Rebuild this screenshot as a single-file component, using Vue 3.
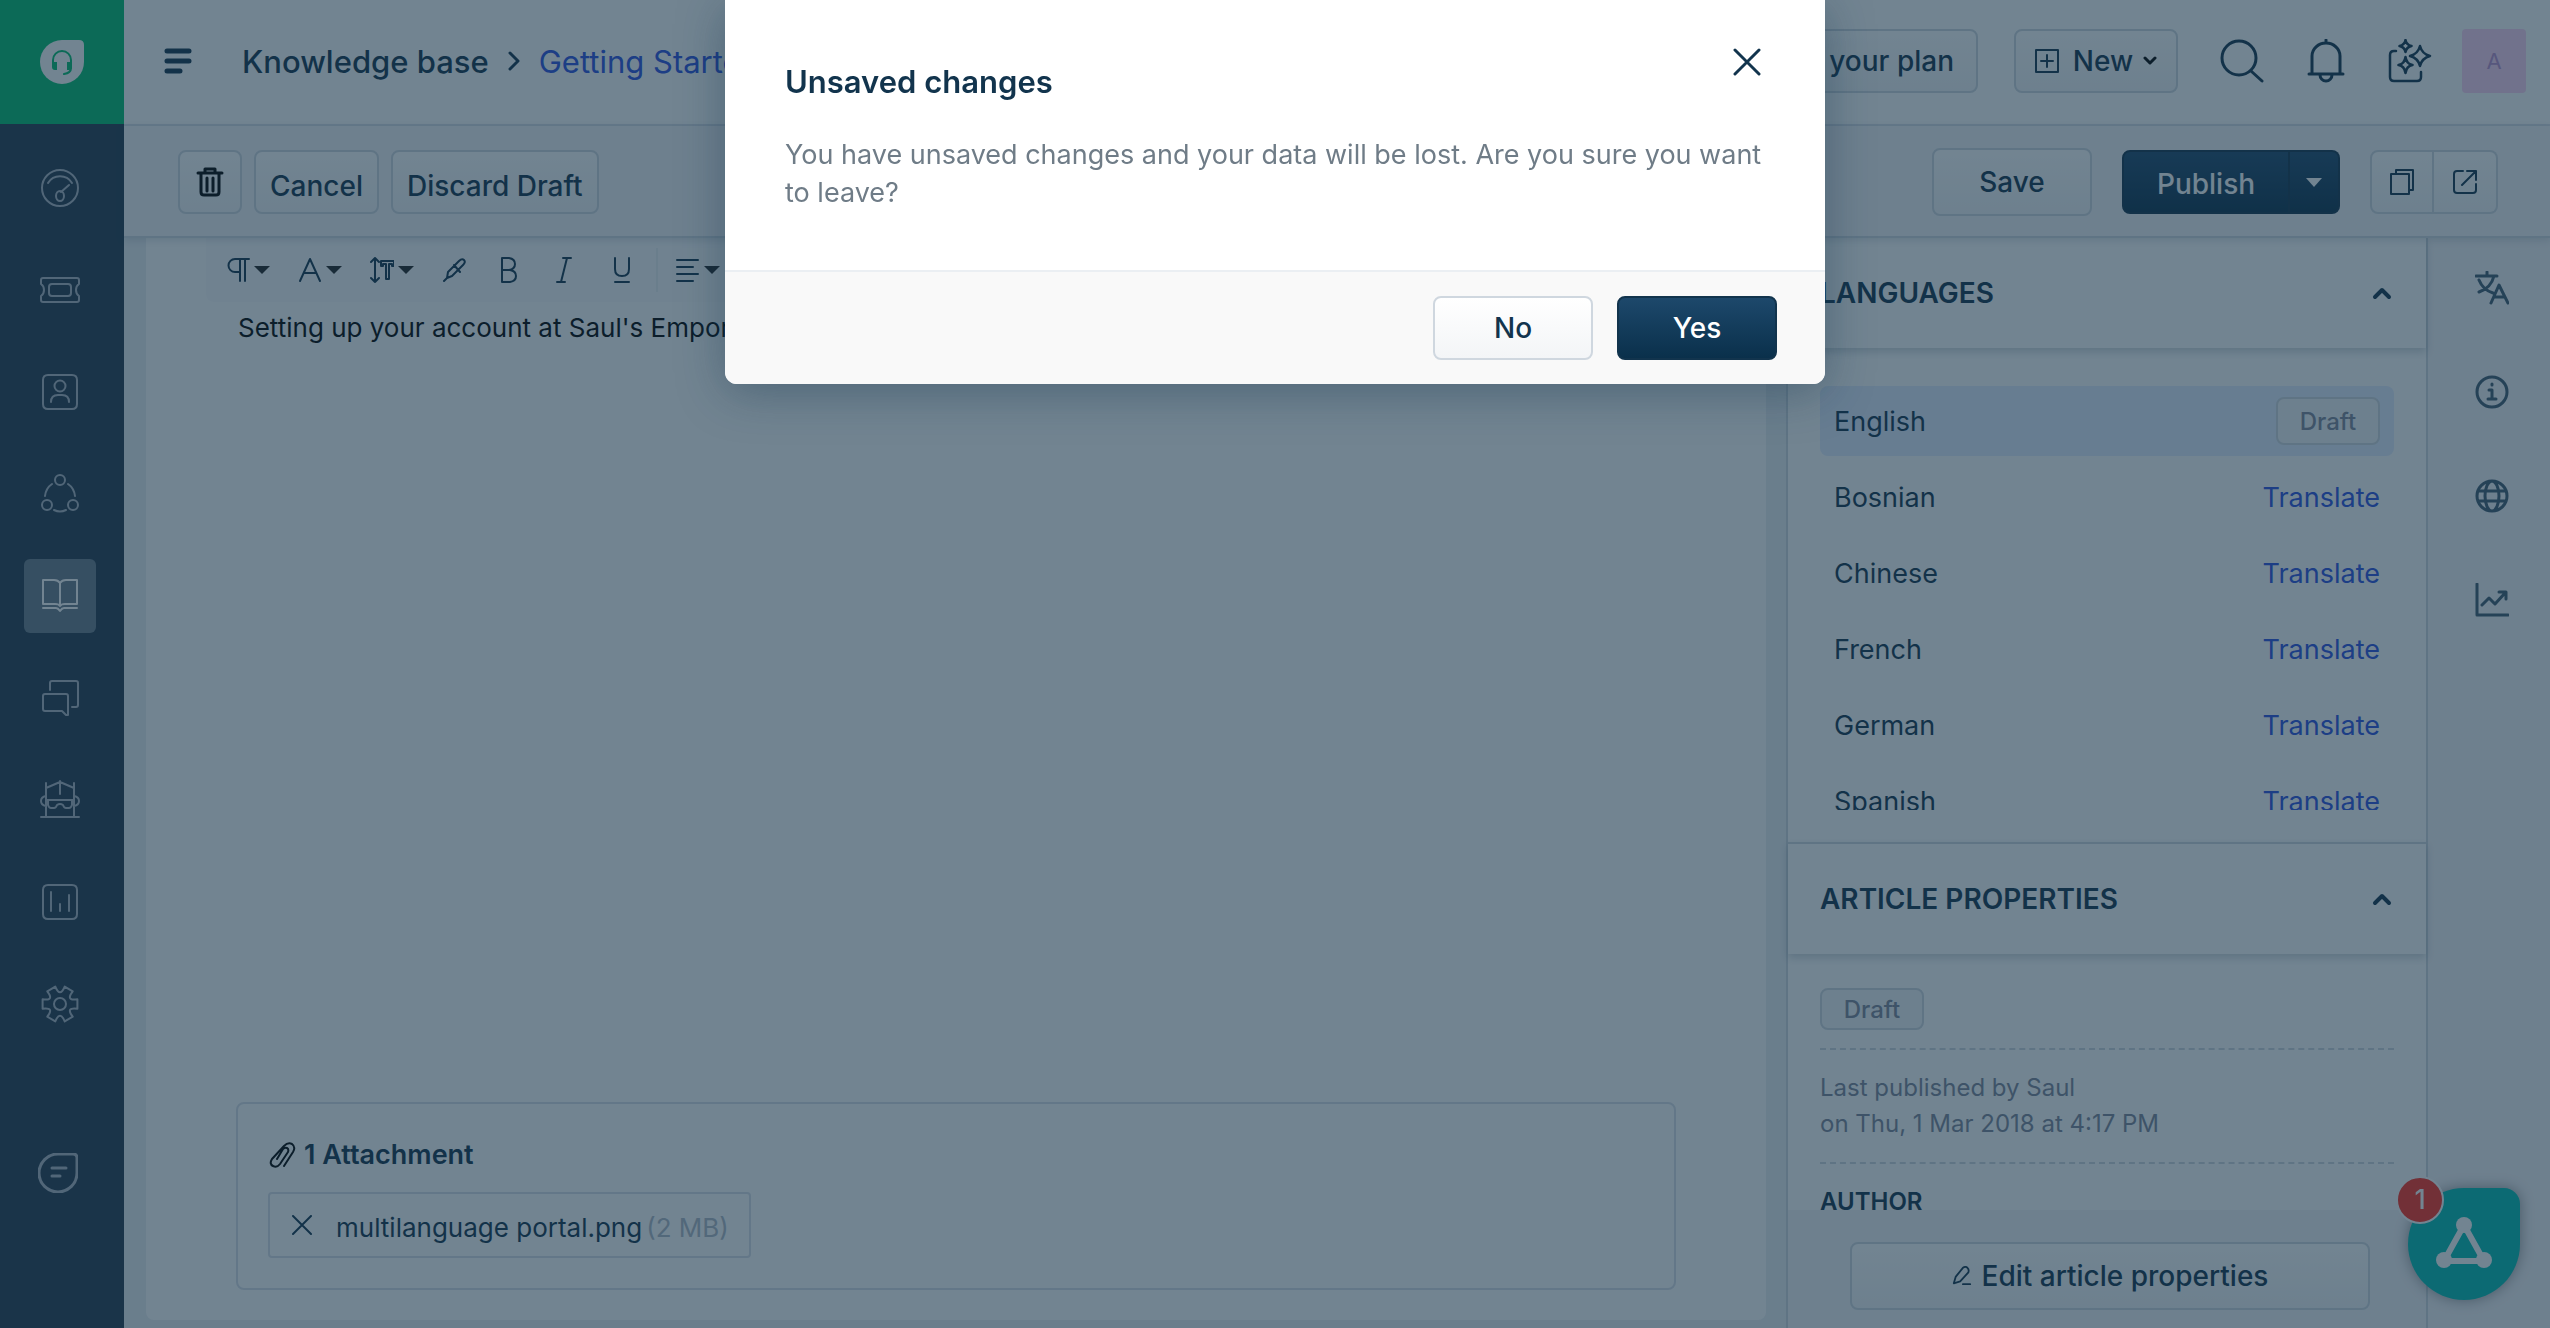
<template>
  <div class="app">
    <!-- sidebar -->
    <nav class="sidebar" aria-label="Main">
      <a href="#" class="logo" aria-label="Home">
        <svg width="44" height="44" viewBox="0 0 44 44">
          <path d="M22 0h17q5 0 5 5v17A22 22 0 1 1 22 0z" fill="#fff" />
          <path d="M13 24v-4a9 9 0 0 1 18 0v8q0 5-7 6" fill="none" stroke="#00be6e" stroke-width="2" />
          <path d="M12 22h5v8h-2q-3 0-3-3zM32 22h-5v8h2q3 0 3-3z" fill="#00be6e" />
        </svg>
      </a>
      <div class="nav-list">
        <a v-for="item in nav" :key="item.name" href="#" class="nav-item" :class="{ active: item.name === current }" :aria-label="item.name" @click.prevent="current = item.name">
          <svg width="40" height="40" viewBox="0 0 40 40"><path :d="item.d" /></svg>
        </a>
      </div>
      <a href="#" class="nav-item switcher" aria-label="Switcher">
        <svg width="40" height="40" viewBox="0 0 40 40"><path d="M20 1h15q4 0 4 4v15A19 19 0 1 1 20 1zM14 15h14M14 23h8" stroke-width="3" /></svg>
      </a>
    </nav>

    <div class="page">
      <!-- header -->
      <header class="header">
        <button class="icon-btn menu" aria-label="Menu">
          <svg width="28" height="28" viewBox="0 0 28 28" stroke-width="5"><path d="M3 4h22M3 14h22M3 24h13" /></svg>
        </button>
        <div class="breadcrumb">
          <span>Knowledge base</span>
          <svg width="14" height="20" viewBox="0 0 14 20" stroke-width="3"><path d="M3 2l8 8-8 8" /></svg>
          <a href="#">Getting Started</a>
        </div>
        <div class="header-right">
          <button class="btn plan">Upgrade your plan</button>
          <button class="btn new">
            <svg width="24" height="24" viewBox="0 0 24 24" stroke-width="2"><path d="M1 1h22v22H1zM12 6v12M6 12h12" /></svg>
            New
            <svg class="dark" width="14" height="10" viewBox="0 0 14 10" stroke-width="3"><path d="M2 2l5 5 5-5" /></svg>
          </button>
          <div class="header-icons">
            <button class="icon-btn" aria-label="Search">
              <svg width="44" height="44" viewBox="0 0 44 44" stroke-width="3"><circle cx="19" cy="19" r="17" /><path d="M31 32l11 10" /></svg>
            </button>
            <button class="icon-btn" aria-label="Notifications">
              <svg width="44" height="44" viewBox="0 0 44 44" stroke-width="3"><path d="M5 35h34M8 35V17a14 13 0 0 1 28 0v18M16 36a6 6 0 0 0 12 0M22 1v3" /></svg>
            </button>
            <button class="icon-btn" aria-label="Assistant">
              <svg width="44" height="44" viewBox="0 0 44 44" stroke-width="2.500"><path d="M8 12H6q-4 0-4 4v22q0 4 4 4h23q4 0 4-4v-5M17.500 1q1 5 6 6-5 1-6 6-1-5-6-6 5-1 6-6zM32 7q2 8 10 10-8 2-10 10-2-8-10-10 8-2 10-10zM17.500 18q1 7 7 8-6 1-7 8-1-7-7-8 6-1 7-8z" /></svg>
            </button>
          </div>
          <button class="avatar" aria-label="Profile">A</button>
        </div>
      </header>

      <!-- action bar -->
      <div class="actions">
        <button class="btn trash" aria-label="Delete">
          <svg class="dark" width="28" height="30" viewBox="0 0 28 30" stroke-width="3"><path d="M2 6h24M9 5V2h10v3M5 7v18q0 3 3 3h12q3 0 3-3V7M11 11v13M17 11v13" /></svg>
        </button>
        <button class="btn low">Cancel</button>
        <button class="btn low">Discard Draft</button>
        <div class="actions-right">
          <button class="btn save">Save</button>
          <div class="split">
            <button class="btn primary publish">Publish</button>
            <button class="btn primary more" aria-label="More publish options">
              <svg class="caret" width="16" height="9" viewBox="0 0 16 9"><path d="M0 0h16L8 9z" /></svg>
            </button>
          </div>
          <div class="split">
            <button class="btn square first" aria-label="Copy">
              <svg width="24" height="26" viewBox="0 0 24 26" stroke-width="2"><path d="M6 4V1h17v20h-4M1 5h18v20H1z" /></svg>
            </button>
            <button class="btn square last" aria-label="Open in new tab">
              <svg width="24" height="24" viewBox="0 0 24 24" stroke-width="2"><path d="M10 1H4Q1 1 1 4v16q0 3 3 3h16q3 0 3-3v-6M14 1h9v9M23 1L9 15" /></svg>
            </button>
          </div>
        </div>
      </div>

      <div class="body">
        <!-- editor -->
        <main class="editor-wrap">
          <div class="editor">
            <div class="tools">
              <button v-for="tool in tools" :key="tool.name" class="tool" :class="{ divided: tool.divided }" :aria-label="tool.name">
                <svg width="24" height="26" viewBox="0 0 24 26" stroke-width="2"><path :d="tool.d" /></svg>
                <svg v-if="tool.menu" class="caret" width="16" height="8" viewBox="0 0 16 8"><path d="M0 0h16L8 8z" /></svg>
              </button>
            </div>
            <p class="content">Setting up your account at Saul's Emporium</p>
            <section class="attachments">
              <h2>
                <svg class="dark" width="28" height="28" viewBox="0 0 28 28" stroke-width="2"><path d="M16 25l9-14q3-5-1-8-4-2-8 2L4 18q-3 5 1 7 4 2 7-2l8-12q1-3-1-4-2-1-4 1L9 18" /></svg>
                1 Attachment
              </h2>
              <div class="file">
                <button class="icon-btn" aria-label="Remove file">
                  <svg width="20" height="20" viewBox="0 0 20 20" stroke-width="2"><path d="M1 1l18 18M19 1L1 19" /></svg>
                </button>
                <span class="file-name">multilanguage portal.png</span>
                <span class="file-size">(2 MB)</span>
              </div>
            </section>
          </div>
        </main>

        <!-- side panel -->
        <aside class="panel">
          <h2 class="panel-head">
            LANGUAGES
            <button class="icon-btn" aria-label="Collapse languages">
              <svg width="20" height="14" viewBox="0 0 20 14" stroke-width="4"><path d="M3 11l7-7 7 7" /></svg>
            </button>
          </h2>
          <ul class="languages">
            <li v-for="lang in languages" :key="lang" :class="{ selected: lang === 'English' }">
              <span>{{ lang }}</span>
              <span v-if="lang === 'English'" class="badge tall">Draft</span>
              <a v-else href="#">Translate</a>
            </li>
          </ul>
          <h2 class="panel-head second">
            ARTICLE PROPERTIES
            <button class="icon-btn" aria-label="Collapse properties">
              <svg width="20" height="14" viewBox="0 0 20 14" stroke-width="4"><path d="M3 11l7-7 7 7" /></svg>
            </button>
          </h2>
          <div class="properties">
            <div class="prop"><span class="badge">Draft</span></div>
            <p class="prop published">Last published by Saul<br />on Thu, 1 Mar 2018 at 4:17 PM</p>
            <h3>AUTHOR</h3>
          </div>
          <div class="panel-foot">
            <button class="btn edit">
              <svg width="20" height="20" viewBox="0 0 22 22" stroke-width="2"><path d="M2 19l2-7 8-10q3-2 5 0t1 5l-9 10-7 2zM12 20h8" /></svg>
              Edit article properties
            </button>
          </div>
        </aside>

        <div class="rail">
          <button v-for="item in rail" :key="item.name" class="icon-btn" :aria-label="item.name">
            <svg width="34" height="34" viewBox="0 0 34 34" stroke-width="3"><path :d="item.d" /></svg>
          </button>
        </div>
      </div>
    </div>

    <button class="chat" aria-label="Chat, 1 unread">
      <svg width="60" height="60" viewBox="0 0 60 60">
        <path d="M30 11L10 47h40z" fill="none" stroke="#fff" stroke-width="6" />
        <g fill="#fff"><circle cx="30" cy="11" r="8" /><circle cx="10" cy="46" r="8" /><circle cx="50" cy="46" r="8" /></g>
      </svg>
      <span class="count">1</span>
    </button>

    <!-- dialog -->
    <div v-if="open" class="backdrop">
      <div class="modal" role="dialog" aria-modal="true" aria-labelledby="modal-title">
        <div class="modal-body">
          <button class="icon-btn close" aria-label="Close" @click="open = false">
            <svg width="28" height="28" viewBox="0 0 28 28" stroke-width="3"><path d="M2 2l24 24M26 2L2 26" /></svg>
          </button>
          <h1 id="modal-title">Unsaved changes</h1>
          <p>You have unsaved changes and your data will be lost. Are you sure you want to leave?</p>
        </div>
        <div class="modal-foot">
          <button class="btn wide" @click="open = false">No</button>
          <button class="btn primary wide" @click="open = false">Yes</button>
        </div>
      </div>
    </div>
  </div>
</template>

<script setup>
import { ref } from 'vue'

const open = ref(true)
const current = ref('Solutions')

const nav = [
  { name: 'Dashboard', d: 'M38 20a18 18 0 1 1-36 0 18 18 0 0 1 36 0zM8 15a14 14 0 0 1 24 0M29 17l-8 7M24 28a4 5 0 1 1-8 0 4 5 0 0 1 8 0z' },
  { name: 'Tickets', d: 'M1 10q0-2 2-2h34q2 0 2 2v4q-3 2-3 6t3 6v4q0 2-2 2H3q-2 0-2-2v-4q3-2 3-6t-3-6zM12 14h16q3 0 3 3v6q0 3-3 3H12q-3 0-3-3v-6q0-3 3-3z' },
  { name: 'Contacts', d: 'M8 3h24q5 0 5 5v24q0 5-5 5H8q-5 0-5-5V8q0-5 5-5zM25.500 14a5.500 5.500 0 1 1-11 0 5.500 5.500 0 0 1 11 0zM11 30q0-7 7-7h4q7 0 7 7' },
  { name: 'Social', d: 'M25 6a5 5 0 1 1-10 0 5 5 0 0 1 10 0zM12 31a5 5 0 1 1-10 0 5 5 0 0 1 10 0zM38 31a5 5 0 1 1-10 0 5 5 0 0 1 10 0zM5 22Q6 14 12 10M35 22q-1-8-7-12M14 36q6 3 12 0' },
  { name: 'Solutions', d: 'M20 7q-2-3-6-3H3v24h12q4 0 5 2 1-2 5-2h12V4H26q-4 0-6 3zv23M3 32h13q2 0 4 3 2-3 4-3h13' },
  { name: 'Forums', d: 'M10 12V5q0-2 2-2h24q2 0 2 2v22q0 2-2 2h-4M5 16h21q2 0 2 2v19h-2l-4-4H5q-2 0-2-2V18q0-2 2-2z' },
  { name: 'Arcade', d: 'M6 3v34M34 3v34M6 8l14-6 14 6M20 1v13M1 37h38M6 20h28M8 21v4q1 3 3 3h3q2 0 3-3 3-2 6 0 1 3 3 3h3q2 0 3-3v-4M6 16q-5 1-5 5t5 5M34 16q5 1 5 5t-5 5' },
  { name: 'Analytics', d: 'M8 3h24q5 0 5 5v24q0 5-5 5H8q-5 0-5-5V8q0-5 5-5zM11 10v19M20 22v7M29 13v16' },
  { name: 'Admin', d: 'M37.400 15.300V24.700Q25.200 23 32.700 32.700L24.700 37.400Q20 26 15.300 37.400L7.300 32.700Q14.800 23 2.600 24.700V15.300Q14.800 17 7.300 7.300L15.300 2.600Q20 14 24.700 2.600L32.700 7.300Q25.200 17 37.400 15.300zM26 20a6 6 0 1 1-12 0 6 6 0 0 1 12 0z' }
]

const tools = [
  { name: 'Paragraph', menu: true, d: 'M23 2H9a6 6 0 0 0 0 13h5M14 2v22M19 2v22' },
  { name: 'Font colour', menu: true, d: 'M2 24L12 2l10 22M6 16h12' },
  { name: 'Font size', menu: true, d: 'M5 1v24M1 5l4-4 4 4M1 21l4 4 4-4M11 4h13v5h-2V7h-3v15h-3V7h-3v2h-2z' },
  { name: 'Highlight', d: 'M2 24l3-3M5 21l1-6L17 4q3-3 5-1t-1 5L10 19zM12 8l6 7' },
  { name: 'Bold', d: 'M4 1h7q6 1 6 6t-6 6H4zM4 13h8q6 1 6 6t-6 6H4z' },
  { name: 'Italic', d: 'M9 1h8M3 25h8M13 1L7 25' },
  { name: 'Underline', d: 'M5 1v11q0 7 7 7t7-7V1M5 25h14' },
  { name: 'Align', menu: true, divided: true, d: 'M1 3h21M1 10h16M1 17h21M1 24h16' }
]

const languages = ['English', 'Bosnian', 'Chinese', 'French', 'German', 'Spanish']

const rail = [
  { name: 'Translations', d: 'M1 5h21M12 1v4M4 9q4 10 14 13M19 5Q16 17 4 21M16 32l8-18 9 18M19 26h11' },
  { name: 'Info', d: 'M32 17a15 15 0 1 1-30 0 15 15 0 0 1 30 0zM14 15h3v9M13 24h8M17 9v1' },
  { name: 'Visibility', d: 'M32 17a15 15 0 1 1-30 0 15 15 0 0 1 30 0zM24 17a7 15 0 1 1-14 0 7 15 0 0 1 14 0zM4 12h26M4 22h26' },
  { name: 'Insights', d: 'M2 1v31h31M7 22l7-7 6 6L30 10M24 9h7v7' }
]
</script>

<style>
body {
  margin: 0;
}
</style>

<style scoped>
.app {
  display: flex;
  height: 100vh;
  overflow: hidden;
  background: #ebeff3;
  color: #12344d;
  font-family: Inter, "Noto Sans", sans-serif;
  font-size: 27px;
}

.app *,
.app {
  box-sizing: border-box;
}

h1,
h2,
h3,
p,
ul {
  margin: 0;
  padding: 0;
}

a {
  color: #2b50e0;
  text-decoration: none;
}

button {
  font: inherit;
  color: inherit;
  cursor: pointer;
}

svg {
  flex: none;
  fill: none;
  stroke: currentColor;
  stroke-linecap: round;
  stroke-linejoin: round;
}

.dark {
  color: #000;
}

.caret {
  fill: currentColor;
  stroke: none;
}

.icon-btn {
  display: flex;
  padding: 0;
  border: none;
  background: none;
}

.btn {
  display: flex;
  align-items: center;
  justify-content: center;
  height: 64px;
  padding: 0 14px;
  border: 2px solid #cfd7df;
  border-radius: 8px;
  background: linear-gradient(#fff, #f3f5f7);
  font-size: 28px;
  font-weight: 500;
  white-space: nowrap;
}

.btn.primary {
  border-color: #12344d;
  background: linear-gradient(#1d486b, #0a304b);
  color: #fff;
}

/* sidebar */
.sidebar {
  display: flex;
  flex-direction: column;
  align-items: center;
  flex: none;
  width: 124px;
  background: #23394d;
}

.logo {
  display: flex;
  align-items: center;
  justify-content: center;
  width: 100%;
  height: 124px;
  background: #00be6e;
}

.logo svg {
  stroke: none;
}

.nav-list {
  display: flex;
  flex-direction: column;
  gap: 28px;
  margin: 27px 4px 0 0;
}

.nav-item {
  display: flex;
  align-items: center;
  justify-content: center;
  width: 72px;
  height: 74px;
  border-radius: 6px;
  color: #adb4c0;
  stroke-width: 2;
}

.nav-item.active {
  background: #697a89;
  color: #fff;
}

.switcher {
  margin: 95px 8px 0 0;
}

/* header */
.page {
  display: flex;
  flex: 1;
  flex-direction: column;
  min-width: 0;
}

.header {
  display: flex;
  align-items: center;
  flex: none;
  height: 126px;
  padding: 0 24px 2px 40px;
  border-bottom: 2px solid #dfe3ec;
  background: #fff;
}

.breadcrumb {
  display: flex;
  align-items: center;
  gap: 18px;
  margin-left: 50px;
  font-size: 31px;
  font-weight: 500;
  white-space: nowrap;
}

.breadcrumb a {
  font-weight: 400;
}

.header-right {
  display: flex;
  align-items: center;
  margin-left: auto;
}

.plan {
  padding: 0 22px;
}

.new {
  gap: 14px;
  width: 164px;
  margin-left: 36px;
}

.new .dark {
  margin-left: -4px;
}

.header-icons {
  display: flex;
  gap: 40px;
  margin: 0 30px 0 42px;
}

.avatar {
  width: 64px;
  height: 64px;
  border: none;
  border-radius: 4px;
  background: #fdd2f2;
  color: #bb8ecd;
  font-size: 22px;
}

/* action bar */
.actions {
  position: relative;
  z-index: 2;
  display: flex;
  align-items: center;
  flex: none;
  gap: 12px;
  height: 112px;
  padding: 2px 52px 0 54px;
  border-bottom: 2px solid #cfd7df;
  background: #f5f4f7;
  box-shadow: 0 2px 8px rgba(18, 52, 77, 0.16);
}

.trash {
  width: 64px;
}

.low {
  padding-top: 8px;
}

.actions-right {
  display: flex;
  align-items: center;
  gap: 30px;
  margin-left: auto;
}

.save {
  width: 160px;
  height: 68px;
}

.split {
  display: flex;
}

.publish {
  width: 168px;
  padding-top: 4px;
  border-radius: 8px 0 0 8px;
}

.more {
  width: 50px;
  padding: 0;
  border-left-width: 0;
  border-radius: 0 8px 8px 0;
}

.square {
  width: 64px;
  padding: 0;
}

.square.first {
  border-radius: 8px 0 0 8px;
}

.square.last {
  border-left: none;
  border-radius: 0 8px 8px 0;
}

/* editor */
.body {
  display: flex;
  flex: 1;
  min-height: 0;
}

.editor-wrap {
  display: flex;
  flex: 1;
  min-width: 0;
  padding: 0 20px 8px 22px;
}

.editor {
  display: flex;
  flex: 1;
  flex-direction: column;
  min-width: 0;
  border-radius: 0 0 8px 8px;
  background: #fff;
}

.tools {
  display: flex;
  align-items: center;
  gap: 28px;
  height: 64px;
  margin: 0 60px;
  padding: 0 20px;
  border-radius: 0 0 8px 8px;
  background: #fbfbfd;
}

.tool {
  display: flex;
  align-items: center;
  gap: 4px;
  min-width: 28px;
  padding: 0;
  border: none;
  background: none;
}

.tool .caret {
  color: #222;
}

.tool.divided {
  height: 44px;
  margin-left: -10px;
  padding-left: 18px;
  border-left: 2px solid #ebeff3;
}

.content {
  padding: 8px 92px;
  color: #000;
  font-size: 26px;
  line-height: 36px;
}

.attachments {
  margin: auto 90px 30px;
  padding: 32px 30px 30px;
  border: 2px solid #dadfe8;
  border-radius: 8px;
}

.attachments h2 {
  display: flex;
  align-items: center;
  gap: 8px;
  margin-bottom: 18px;
  font-size: 27px;
  font-weight: 600;
  line-height: 38px;
}

.file {
  display: flex;
  align-items: center;
  width: fit-content;
  height: 66px;
  padding: 0 20px 0 22px;
  border: 2px solid #dadfe8;
  border-radius: 4px;
  font-size: 26px;
}

.file-name {
  margin: 4px 4px 0 24px;
}

.file-size {
  margin-top: 4px;
  color: #b0b8c6;
}

/* side panel */
.panel {
  display: flex;
  flex-direction: column;
  flex: none;
  width: 642px;
  border: solid #cfd7df;
  border-width: 0 2px;
  background: #fff;
}

.panel-head {
  position: relative;
  display: flex;
  align-items: center;
  justify-content: space-between;
  flex: none;
  height: 110px;
  padding: 0 34px 0 32px;
  box-shadow: 0 4px 8px rgba(18, 52, 77, 0.2);
  font-size: 28px;
  font-weight: 600;
}

.panel-head.second {
  height: 112px;
  border-top: 2px solid #cfd7df;
}

.languages {
  flex: none;
  height: 424px;
  margin: 38px 32px 32px;
  overflow: hidden;
  list-style: none;
}

.languages li {
  display: flex;
  align-items: center;
  justify-content: space-between;
  height: 70px;
  margin-bottom: 6px;
  padding: 0 14px;
  border-radius: 8px;
}

.languages li.selected {
  background: #e3edff;
}

.badge {
  display: inline-flex;
  align-items: center;
  justify-content: center;
  width: 104px;
  height: 42px;
  border: 2px solid #cfd7df;
  border-radius: 8px;
  background: #f3f5f7;
  color: #7d8698;
  font-size: 24px;
  font-weight: 500;
}

.badge.tall {
  height: 48px;
}

.properties {
  flex: 1;
  min-height: 0;
  padding: 34px 32px 0;
  overflow: hidden;
}

.prop {
  display: flex;
  border-bottom: 2px dashed #cfd7df;
  padding-bottom: 18px;
}

.published {
  display: block;
  padding: 20px 0;
  color: #7d8698;
  font-size: 24px;
  line-height: 36px;
}

.properties h3 {
  margin-top: 20px;
  font-size: 24px;
  font-weight: 600;
  line-height: 36px;
}

.panel-foot {
  flex: none;
  height: 118px;
  padding: 32px 56px 0 62px;
  background: #f5f4f7;
}

.edit {
  gap: 10px;
  width: 100%;
  height: 68px;
}

.rail {
  display: flex;
  flex-direction: column;
  align-items: center;
  flex: none;
  gap: 70px;
  width: 122px;
  padding: 33px 0 0 6px;
  background: #f5f4f7;
}

.rail svg {
  opacity: 0.8;
}

/* chat widget */
.chat {
  position: fixed;
  right: 30px;
  bottom: 28px;
  z-index: 5;
  display: flex;
  align-items: center;
  justify-content: center;
  width: 112px;
  height: 112px;
  padding: 0;
  border: none;
  border-radius: 56px 16px 56px 56px;
  background: #00beb4;
  box-shadow: 0 0 14px rgba(0, 0, 0, 0.4);
}

.chat svg {
  stroke: none;
}

.count {
  position: absolute;
  top: -12px;
  left: -12px;
  width: 48px;
  height: 48px;
  border: 2px solid #fff;
  border-radius: 50%;
  background: #ff2d1e;
  color: #fff;
  font-weight: 500;
  line-height: 44px;
  text-align: center;
}

/* dialog */
.backdrop {
  position: fixed;
  inset: 0;
  z-index: 10;
  display: flex;
  align-items: flex-start;
  justify-content: center;
  background: rgba(20, 50, 72, 0.6);
}

.modal {
  width: 1100px;
  max-width: 100%;
  border-radius: 0 0 12px 12px;
  background: #fff;
  box-shadow: 0 8px 48px rgba(18, 52, 77, 0.4);
}

.modal-body {
  position: relative;
  padding: 62px 58px 58px 60px;
}

.modal h1 {
  font-size: 31px;
  font-weight: 600;
  line-height: 40px;
}

.modal p {
  margin-top: 34px;
  color: #6f7c87;
  font-size: 27px;
  line-height: 38px;
}

.close {
  position: absolute;
  top: 48px;
  right: 64px;
}

.modal-foot {
  display: flex;
  justify-content: flex-end;
  gap: 24px;
  padding: 24px 48px;
  border-top: 2px solid #ebeff3;
  border-radius: 0 0 12px 12px;
  background: #f9f9f9;
}

.wide {
  width: 160px;
}
</style>
